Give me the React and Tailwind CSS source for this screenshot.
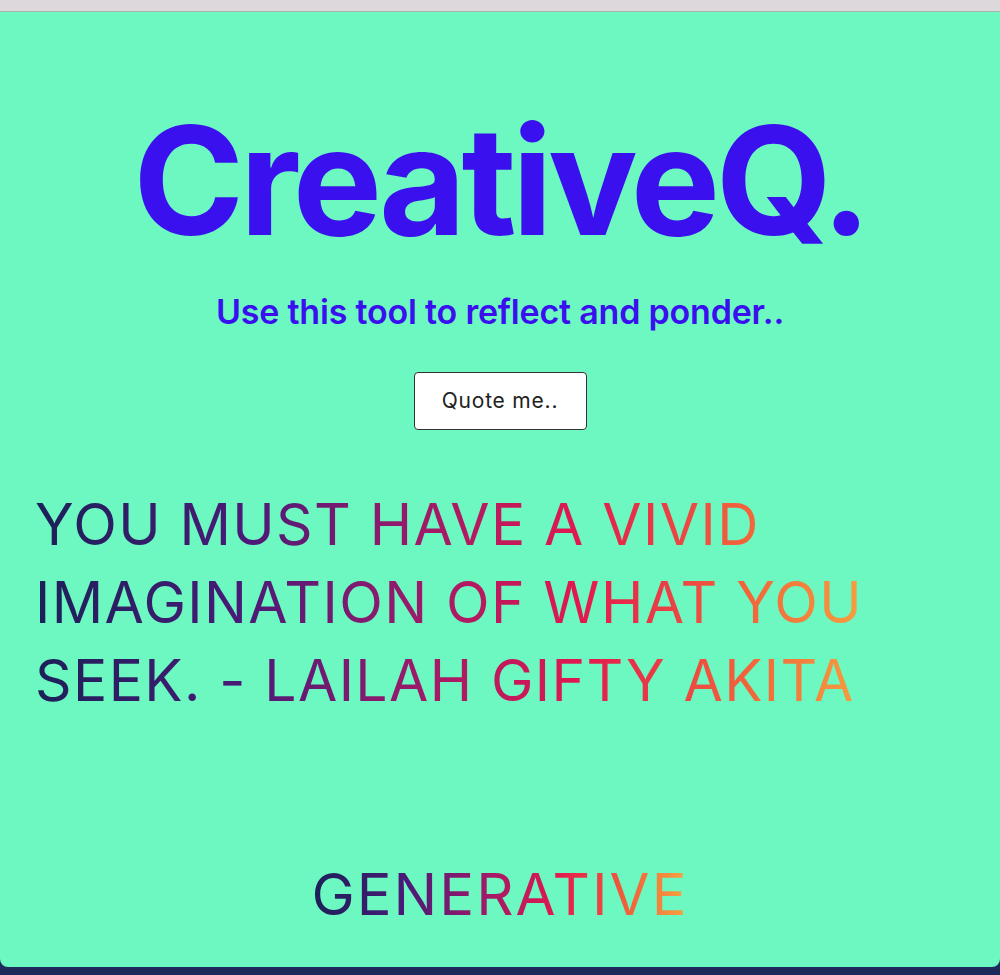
import React from 'react'

const gradientText =
  'bg-[linear-gradient(90deg,#1b2158_0%,#4a1a78_25%,#9a1a6a_45%,#e3184f_65%,#f2653a_85%,#f5a640_100%)] bg-clip-text text-transparent'

export default function App() {
  return (
    <div className="h-[975px] w-[1000px] flex flex-col bg-[#1d2a5c] font-['Inter',sans-serif] overflow-hidden">
      <div className="h-[12px] bg-[#dcd8dc] border-b border-[#a9b3ae]" />
      <main className="flex-1 bg-[#6cf8c0] rounded-b-lg flex flex-col items-center">
        <h1 className="mt-[94px] text-[150px] leading-none font-bold tracking-[-4.5px] text-[#3a10ee]">
          CreativeQ.
        </h1>
        <p className="mt-[30px] text-[34px] font-semibold tracking-[-0.2px] text-[#3a10ee]">
          Use this tool to reflect and ponder..
        </p>
        <button className="mt-[35px] w-[173px] h-[58px] bg-white border border-[#333] rounded-[4px] text-[21px] tracking-[0.8px] text-[#222]">
          Quote me..
        </button>
        <div className="self-stretch px-[35px] mt-[56px]">
          <p className={`w-[840px] text-[57px] leading-[78px] tracking-[1.4px] uppercase ${gradientText}`}>
            You must have a vivid
            <br />
            imagination of what you
            <br />
            seek. - Lailah Gifty Akita
          </p>
        </div>
        <p className={`mt-auto mb-[44px] text-[58px] leading-none tracking-[2px] ${gradientText}`}>
          GENERATIVE
        </p>
      </main>
      <div className="h-[8px]" />
    </div>
  )
}
